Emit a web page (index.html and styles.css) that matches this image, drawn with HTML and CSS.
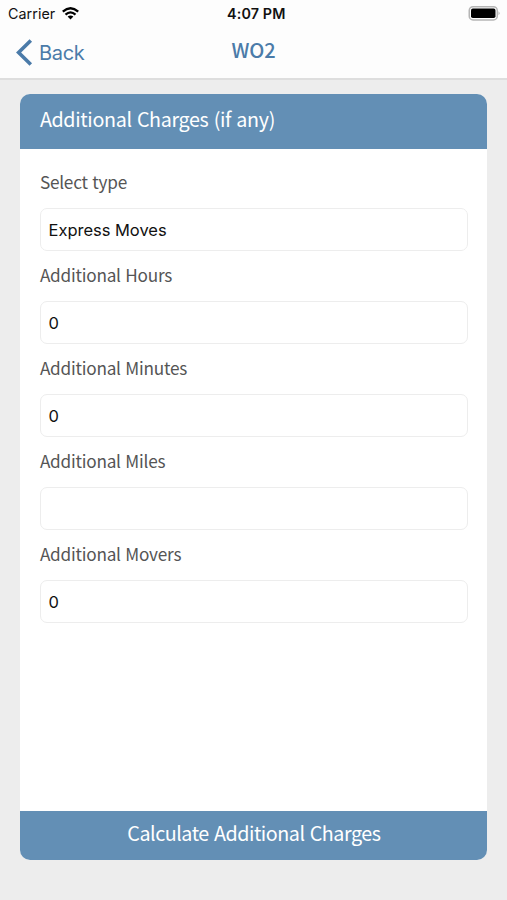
FILE: index.html
```html
<!DOCTYPE html>
<html lang="en">
<head>
<meta charset="utf-8">
<title>WO2</title>
<link rel="stylesheet" href="styles.css">
</head>
<body>
<header class="top">
  <div class="status">
    <div class="carrier"><span class="carrier-name">Carrier</span>
      <svg class="wifi" width="17" height="13" viewBox="0 0 17 13" fill="none" stroke="#000" stroke-width="2.300"><path d="M.8 4.600Q8.500-2.200 16.200 4.600M3.500 7.600Q8.500 3.200 13.500 7.600"/><path d="M8.500 12.400L5.600 9.600Q8.500 7.200 11.400 9.600Z" fill="#000" stroke="none"/></svg>
    </div>
    <time class="clock">4:07 PM</time>
    <svg class="battery" width="32" height="15" viewBox="0 0 32 15"><rect x="1.250" y=".75" width="28" height="13.200" rx="3.800" fill="#fff" stroke="#b5b5b5" stroke-width="1.500"/><rect x="3" y="2.600" width="24.500" height="9.500" rx="1.800" fill="#000"/><path d="M30.600 5.200Q32.300 7.200 30.600 9.300Z" fill="#999"/></svg>
  </div>
  <nav class="nav">
    <a class="back"><svg width="17" height="27" viewBox="0 0 17 27" fill="none" stroke="#4b7ba9" stroke-width="3.600"><path d="M14.800 1.500L2.600 13.500L14.800 25.500"/></svg><span class="back-text">Back</span></a>
    <h1 class="title">WO2</h1>
  </nav>
</header>
<main class="card">
  <h2 class="card-head"><span class="head-text">Additional Charges (if any)</span></h2>
  <form class="fields">
    <label class="field"><span class="label">Select type</span><span class="box">Express Moves</span></label>
    <label class="field"><span class="label">Additional Hours</span><span class="box">0</span></label>
    <label class="field"><span class="label">Additional Minutes</span><span class="box">0</span></label>
    <label class="field"><span class="label">Additional Miles</span><span class="box"></span></label>
    <label class="field"><span class="label">Additional Movers</span><span class="box">0</span></label>
  </form>
  <div class="submit"><span class="submit-text">Calculate Additional Charges</span></div>
</main>
</body>
</html>
```
FILE: styles.css
```css
* { box-sizing: border-box; }
body {
  margin: 0;
  height: 900px;
  background: #ededed;
  font-family: "Noto Sans CJK JP", "Noto Sans", sans-serif;
  overflow: hidden;
}
.top {
  height: 80px;
  background: #fdfdfd;
  border-bottom: 2px solid #dedede;
}
.status {
  display: grid;
  grid-template-columns: 219px auto 1fr;
  align-items: center;
  height: 27px;
  padding: 0 7px 0 8px;
  font: 14.3px/27px Inter, sans-serif;
  color: #111;
}
.carrier { display: flex; align-items: center; gap: 7px; }
.carrier-name { letter-spacing: .05px; }
.clock { font-weight: 600; letter-spacing: .15px; }
.battery { justify-self: end; }
.nav {
  display: grid;
  grid-template-columns: 1fr auto 1fr;
  align-items: center;
  height: 51px;
  padding: 0 16px;
  color: #4b7ba9;
}
.back {
  display: flex;
  align-items: center;
  gap: 6px;
  font: 20px/28px Inter, sans-serif;
  letter-spacing: -.3px;
}
.title { margin: 0 0 6px; font-size: 20px; line-height: 28px; font-weight: 500; }
.card {
  display: flex;
  flex-direction: column;
  width: 467px;
  height: 766px;
  margin: 14px 0 0 20.4px;
  background: #fff;
  border-radius: 10px;
  overflow: hidden;
}
.card-head {
  height: 55px;
  margin: 0;
  padding: 0 19.5px;
  background: #638fb5;
  color: #fff;
  font-size: 19.7px;
  line-height: 49px;
  font-weight: 400;
  letter-spacing: -.35px;
  word-spacing: 1.2px;
}
.fields { flex: 1; padding: 17px 19px 0 19.500px; }
.field { display: block; height: 92.900px; }
.label {
  display: block;
  height: 42px;
  font-size: 17.200px;
  line-height: 32px;
  letter-spacing: -.23px;
  word-spacing: .9px;
  color: #555;
}
.box {
  display: block;
  height: 43px;
  padding: 0 7.700px;
  border: 1px solid #ededed;
  border-radius: 7px;
  font: 16.5px/42px Inter, sans-serif;
  letter-spacing: -.03px;
  color: #111;
}
.submit {
  height: 49px;
  background: #638fb5;
  color: #fff;
  font-size: 19.7px;
  line-height: 43px;
  letter-spacing: -.46px;
  word-spacing: 1.2px;
  text-align: center;
}
```
